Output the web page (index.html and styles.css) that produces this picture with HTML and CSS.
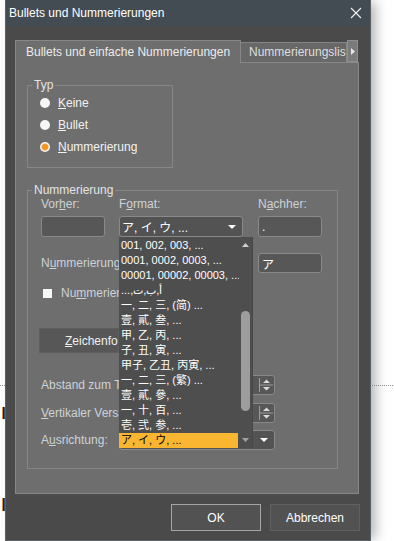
FILE: index.html
```html
<!DOCTYPE html>
<html lang="de">
<head>
<meta charset="utf-8">
<title>Bullets und Nummerierungen</title>
<link rel="stylesheet" href="styles.css">
</head>
<body>
<div class="desk">
  <div class="edge edge-left">
    <div class="dots"></div>
    <span class="caret caret-1"></span>
    <span class="caret caret-2"></span>
  </div>

  <div class="dialog">
    <div class="titlebar">
      <span class="title">Bullets und Nummerierungen</span>
      <svg class="close" width="12" height="12" viewBox="0 0 12 12"><path d="M1 1 L11 11 M11 1 L1 11" stroke="#f2f2f2" stroke-width="1.1" fill="none"/></svg>
    </div>

    <div class="dbody">
      <div class="tabs">
        <div class="tab tab-active">Bullets und einfache Nummerierungen</div>
        <div class="tab tab-inactive">Nummerierungslisten</div>
        <div class="tab-scroll"><svg width="4" height="7" viewBox="0 0 4 7"><path d="M0 0 L4 3.5 L0 7Z" fill="#e6e6e6"/></svg></div>
      </div>

      <div class="panel">
        <fieldset class="group group-typ">
          <legend>Typ</legend>
          <div class="radios">
            <div class="radio-row"><span class="radio"></span><span><u>K</u>eine</span></div>
            <div class="radio-row"><span class="radio"></span><span><u>B</u>ullet</span></div>
            <div class="radio-row"><span class="radio on"></span><span><u>N</u>ummerierung</span></div>
          </div>
        </fieldset>

        <fieldset class="group group-num">
          <legend>Nummerierung</legend>
          <div class="num-body">
            <div class="row r-labels">
              <span class="lbl">Vor<u>h</u>er:</span>
              <span class="lbl">F<u>o</u>rmat:</span>
              <span class="lbl">N<u>a</u>chher:</span>
            </div>
            <div class="row r-inputs">
              <div class="field"></div>
              <div class="combo-wrap">
                <div class="combo">
                  <span class="combo-text">ア, イ, ウ, ...</span>
                  <svg width="8" height="4" viewBox="0 0 8 4"><path d="M0 0 H8 L4 4Z" fill="#fff"/></svg>
                </div>
                <div class="dropdown">
                  <div class="dd-items">
                    <div class="dd-item">001, 002, 003, ...</div>
                    <div class="dd-item">0001, 0002, 0003, ...</div>
                    <div class="dd-item">00001, 00002, 00003, ...</div>
                    <div class="dd-item"><bdi dir="rtl">أ,ب,ت,...</bdi></div>
                    <div class="dd-item">一, 二, 三, (简) ...</div>
                    <div class="dd-item">壹, 貳, 叁, ...</div>
                    <div class="dd-item">甲, 乙, 丙, ...</div>
                    <div class="dd-item">子, 丑, 寅, ...</div>
                    <div class="dd-item">甲子, 乙丑, 丙寅, ...</div>
                    <div class="dd-item">一, 二, 三, (繁) ...</div>
                    <div class="dd-item">壹, 貳, 參, ...</div>
                    <div class="dd-item">一, 十, 百, ...</div>
                    <div class="dd-item">壱, 弐, 参, ...</div>
                    <div class="dd-item sel">ア, イ, ウ, ...</div>
                  </div>
                  <div class="dd-scroll">
                    <div class="dd-btn"><svg width="7" height="4" viewBox="0 0 7 4"><path d="M0 4 L3.5 0 L7 4Z" fill="#cfcfcf"/></svg></div>
                    <div class="dd-track"><div class="dd-thumb"></div></div>
                    <div class="dd-btn"><svg width="7" height="4" viewBox="0 0 7 4"><path d="M0 0 L7 0 L3.5 4Z" fill="#a3a3a3"/></svg></div>
                  </div>
                </div>
              </div>
              <div class="field field-text">.</div>
            </div>
            <div class="row r-start">
              <span class="lbl clip">N<u>u</u>mmerierung beginnen bei:</span>
              <div class="field field-text col3">ア</div>
            </div>
            <div class="row r-check">
              <div class="check-row span3"><span class="checkbox"></span><span class="lbl clip-check">Nu<u>m</u>merierung fortsetzen</span></div>
            </div>
            <div class="row r-button">
              <button class="btn-char span2"><u>Z</u>eichenformat...</button>
            </div>
            <div class="row r-spin1">
              <span class="lbl clip">Abstand zum Text:</span>
              <div class="spin">
                <svg width="16" height="18" viewBox="0 0 16 18"><path d="M1.5 2 V16 M1.5 9 H15" stroke="#9c9c9c" stroke-width="1" fill="none"/><path d="M5 7 L8.5 3.5 L12 7Z M5 11 L12 11 L8.5 14.5Z" fill="#dadada"/></svg>
              </div>
            </div>
            <div class="row r-spin2">
              <span class="lbl clip"><u>V</u>ertikaler Versatz:</span>
              <div class="spin">
                <svg width="16" height="18" viewBox="0 0 16 18"><path d="M1.5 2 V16 M1.5 9 H15" stroke="#9c9c9c" stroke-width="1" fill="none"/><path d="M5 7 L8.5 3.5 L12 7Z M5 11 L12 11 L8.5 14.5Z" fill="#dadada"/></svg>
              </div>
            </div>
            <div class="row r-align">
              <span class="lbl clip">A<u>u</u>srichtung:</span>
              <div class="combo combo-wide">
                <span class="combo-text"></span>
                <svg width="8" height="4" viewBox="0 0 8 4"><path d="M0 0 H8 L4 4Z" fill="#fff"/></svg>
              </div>
            </div>
          </div>
        </fieldset>
      </div>

      <div class="buttons">
        <button class="btn btn-default">OK</button>
        <button class="btn">Abbrechen</button>
      </div>
    </div>
  </div>

  <div class="edge edge-right">
    <div class="dots"></div>
  </div>
</div>
</body>
</html>
```

FILE: styles.css
```css
* { box-sizing: border-box; }
html, body { margin: 0; padding: 0; }
body {
  width: 394px;
  height: 541px;
  overflow: hidden;
  background: #ffffff;
  font-family: "Liberation Sans", Arial, "Noto Sans CJK SC", sans-serif;
  font-size: 12px;
  color: #e8e8e8;
}
u { text-decoration: underline; text-underline-offset: 1px; }

.desk { display: flex; height: 541px; }

.edge { flex: none; display: flex; flex-direction: column; }
.edge-left { width: 5px; padding-top: 385px; }
.edge-right { flex: 1; padding-top: 385px; padding-left: 1px; }
.dots {
  height: 1px;
  background-image: linear-gradient(90deg, #8a8a8a 50%, transparent 50%);
  background-size: 2px 1px;
}
.caret {
  display: block;
  width: 3px;
  margin-left: 2px;
  background: linear-gradient(90deg, #e8921e 0 1px, #1a1a1a 1px 2px, #31558e 2px);
}
.caret-1 { height: 12px; margin-top: 21px; }
.caret-2 { height: 13px; margin-top: 79px; }

/* dialog */
.dialog {
  flex: none;
  width: 366px;
  height: 541px;
  background: #4a4a4a;
  border: 1px solid #5c6368;
  border-top: 0;
  box-shadow: 6px 0 12px -2px rgba(0, 0, 0, 0.32);
  display: flex;
  flex-direction: column;
}
.titlebar {
  flex: none;
  height: 26px;
  background: #434c53;
  display: flex;
  align-items: center;
  justify-content: space-between;
  padding: 0 8px 0 3px;
  color: #ffffff;
}
.title { line-height: 14px; }

.dbody {
  flex: 1;
  display: flex;
  flex-direction: column;
  padding: 14px 10px 0 9px;
}

/* tabs */
.tabs { display: flex; align-items: flex-end; height: 22px; flex: none; }
.tab { white-space: nowrap; line-height: 14px; }
.tab-active {
  width: 226px;
  height: 23px;
  margin-bottom: -1px;
  background: #6e6e6e;
  border: 1px solid #888888;
  border-bottom: 0;
  padding: 4px 0 0 10px;
  position: relative;
  z-index: 1;
  color: #ececec;
}
.tab-inactive {
  width: 106px;
  height: 20px;
  background: #686868;
  border: 1px solid #868686;
  border-left: 0;
  border-bottom: 0;
  padding: 2px 0 0 8px;
  overflow: hidden;
  color: #dedede;
}
.tab-scroll {
  width: 11px;
  height: 22px;
  background: #7b7b7b;
  border: 1px solid #8e8e8e;
  display: flex;
  align-items: center;
  justify-content: center;
}

/* panel */
.panel {
  flex: none;
  width: 344px;
  height: 432px;
  background: #6e6e6e;
  border: 1px solid #888888;
  padding: 15px 0 0 11px;
}

.group {
  margin: 0;
  padding: 0;
  border: 1px solid #868686;
  min-width: 0;
}
.group legend {
  padding: 0 2px;
  margin-left: 4px;
  line-height: 14px;
  color: #e4e4e4;
}
.group-typ { width: 146px; }
.radios { display: flex; flex-direction: column; padding: 0 0 9px 12px; }
.radio-row { display: flex; align-items: center; gap: 8px; height: 22px; color: #f2f2f2; }
.radio {
  width: 10px;
  height: 10px;
  border-radius: 50%;
  background: #f6f6f6;
  flex: none;
}
.radio.on {
  background: radial-gradient(circle, #f29628 0 2.6px, #f6bd7c 3.3px, #fbfbfb 4.2px);
}

.group-num { width: 311px; margin-top: 15px; }
.num-body { display: flex; flex-direction: column; padding: 0 15px 18px 13px; }
.row {
  display: grid;
  grid-template-columns: 64px 125px 64px;
  column-gap: 14px;
  align-items: center;
}
.span2 { grid-column: 1 / span 2; }
.span3 { grid-column: 1 / span 3; }
.col3 { grid-column: 3; }
.lbl { white-space: nowrap; color: #cdd2d6; line-height: 14px; }
.clip { display: block; width: 78px; overflow: hidden; }
.clip-check { display: block; width: 58px; overflow: hidden; }

.r-labels { height: 14px; }
.r-inputs { height: 21px; margin-top: 5px; }
.r-start { height: 20px; margin-top: 16px; }
.r-check { height: 14px; margin-top: 13px; }
.r-button { height: 25px; margin-top: 28px; }
.r-spin1 { height: 20px; margin-top: 22px; }
.r-spin2 { height: 20px; margin-top: 8px; }
.r-align { height: 20px; margin-top: 7px; }

.field {
  height: 100%;
  background: #575757;
  border: 1px solid #898989;
  border-radius: 3px;
  color: #ffffff;
  padding: 0 3px;
  display: flex;
  align-items: center;
}
.r-inputs .field { height: 21px; }
.r-start .field { height: 20px; }

.combo-wrap { position: relative; height: 21px; }
.combo {
  height: 21px;
  width: 124px;
  background: #535353;
  border: 1px solid #898989;
  border-radius: 3px;
  display: flex;
  align-items: center;
  justify-content: space-between;
  padding: 0 6px 0 2px;
  color: #ffffff;
}
.combo-text { white-space: nowrap; }
.combo-wide { width: 156px; height: 20px; }

.check-row { display: flex; align-items: center; gap: 9px; padding-left: 2px; }
.checkbox { width: 9px; height: 9px; background: #f6f6f6; flex: none; }

.btn-char {
  width: 80px;
  height: 25px;
  margin-left: -2px;
  background: #575757;
  border: 1px solid #5e5e5e;
  color: #f0f0f0;
  font: inherit;
  padding: 0 0 0 25px;
  text-align: left;
  white-space: nowrap;
  overflow: hidden;
}

.spin {
  width: 156px;
  height: 20px;
  background: #575757;
  border: 1px solid #898989;
  border-radius: 3px;
  display: flex;
  justify-content: flex-end;
  align-items: center;
}

/* dropdown popup */
.dropdown {
  position: absolute;
  left: 0;
  top: 100%;
  z-index: 10;
  width: 134px;
  height: 211px;
  background: #4e4e4e;
  border-right: 1px solid #474747;
  display: flex;
}
.dd-items {
  width: 120px;
  flex: none;
  display: flex;
  flex-direction: column;
  padding-top: 1px;
  font-size: 11px;
}
.dd-item {
  height: 15px;
  line-height: 15px;
  padding-left: 2px;
  color: #ffffff;
  white-space: nowrap;
  overflow: hidden;
}
.dd-item.sel { background: #fbb631; color: #000000; width: 119px; }
.dd-scroll { flex: 1; display: flex; flex-direction: column; align-items: center; }
.dd-btn { height: 16px; flex: none; display: flex; align-items: center; justify-content: center; }
.dd-track { flex: 1; padding-top: 58px; }
.dd-thumb { width: 9px; height: 100px; border-radius: 5px; background: #9d9d9d; }

/* dialog buttons */
.buttons { display: flex; justify-content: flex-end; gap: 9px; margin-top: 10px; }
.btn {
  width: 90px;
  height: 27px;
  background: #525252;
  border: 1px solid #606060;
  color: #ffffff;
  font: inherit;
  padding: 0;
}
.btn-default { border-color: #a4a4a4; }
```
